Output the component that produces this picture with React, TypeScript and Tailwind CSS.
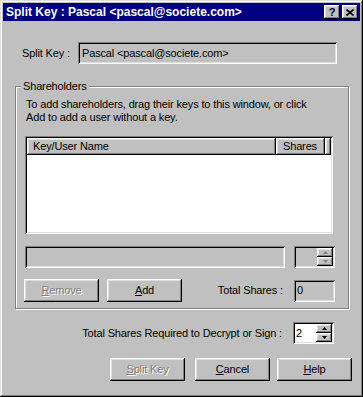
import React from 'react';

const raised =
  'shadow-[inset_-1px_-1px_0_#000,inset_1px_1px_0_#fff,inset_-2px_-2px_0_#808080,inset_2px_2px_0_#dfdfdf]';
const sunken =
  'shadow-[inset_1px_1px_0_#808080,inset_-1px_-1px_0_#fff,inset_2px_2px_0_#000,inset_-2px_-2px_0_#dfdfdf]';

const Btn: React.FC<{ label: string; u: number; disabled?: boolean; className?: string }> = ({
  label,
  u,
  disabled,
  className = '',
}) => (
  <div
    className={`flex h-[23px] w-[75px] items-center justify-center bg-[#c0c0c0] shadow-[inset_-1px_-1px_0_#000,inset_1px_1px_0_#fff,inset_-2px_-2px_0_#808080,inset_2px_2px_0_#dfdfdf] ${
      disabled ? 'text-[#808080] [text-shadow:1px_1px_0_#fff]' : 'text-black'
    } ${className}`}
  >
    <span>
      {label.slice(0, u)}
      <span className="underline underline-offset-[1px]">{label[u]}</span>
      {label.slice(u + 1)}
    </span>
  </div>
);

const Spinner: React.FC<{ disabled?: boolean }> = ({ disabled }) => {
  const fill = disabled ? '#808080' : '#000';
  return (
    <div className="flex flex-col">
      <div className={`flex h-[9px] w-[16px] items-center justify-center bg-[#c0c0c0] ${raised}`}>
        <svg width="5" height="3" viewBox="0 0 5 3">
          <path d="M2.5 0 L5 3 L0 3 Z" fill={fill} />
        </svg>
      </div>
      <div className={`flex h-[9px] w-[16px] items-center justify-center bg-[#c0c0c0] ${raised}`}>
        <svg width="5" height="3" viewBox="0 0 5 3">
          <path d="M0 0 L5 0 L2.5 3 Z" fill={fill} />
        </svg>
      </div>
    </div>
  );
};

export default function App() {
  return (
    <div
      className="flex h-[397px] w-[363px] flex-col bg-[#c0c0c0] p-[3px] text-[11px] leading-[13px] tracking-[-0.15px] text-black shadow-[inset_-1px_-1px_0_#000,inset_1px_1px_0_#dfdfdf,inset_-2px_-2px_0_#808080,inset_2px_2px_0_#fff]"
      style={{ fontFamily: '"Liberation Sans", Arial, sans-serif' }}
    >
      {/* title bar */}
      <div className="flex h-[18px] items-center bg-[#000080] pl-[3px] pr-[2px]">
        <span className="flex-1 text-[12px] font-bold tracking-normal text-white">Split Key : Pascal &lt;pascal@societe.com&gt;</span>
        <div className={`flex h-[14px] w-[16px] items-center justify-center bg-[#c0c0c0] text-[11px] font-bold ${raised}`}>?</div>
        <div className={`ml-[2px] flex h-[14px] w-[16px] items-center justify-center bg-[#c0c0c0] ${raised}`}>
          <svg width="8" height="7" viewBox="0 0 8 7">
            <path d="M0.5 0.5 L7.5 6.5 M7.5 0.5 L0.5 6.5" stroke="#000" strokeWidth="1.6" />
          </svg>
        </div>
      </div>

      {/* split key row */}
      <div className="mt-[21px] flex items-center pl-[19px]">
        <span className="w-[56px]">Split Key :</span>
        <div className={`flex h-[22px] w-[259px] items-center bg-[#c0c0c0] pl-[4px] ${sunken}`}>
          Pascal &lt;pascal@societe.com&gt;
        </div>
      </div>

      {/* shareholders group */}
      <fieldset className="ml-[12px] mt-[16px] w-[334px] border border-[#808080] pb-[6px] shadow-[inset_1px_1px_0_#fff,1px_1px_0_#fff]">
        <legend className="ml-[5px] bg-[#c0c0c0] px-[2px]">Shareholders</legend>
        <p className="ml-[10px] mt-[5px]">
          To add shareholders, drag their keys to this window, or click
          <br />
          Add to add a user without a key.
        </p>

        <div className={`ml-[9px] mt-[12px] flex h-[98px] w-[308px] flex-col bg-white p-[2px] ${sunken}`}>
          <div className="flex h-[17px]">
            <div className={`flex w-[249px] items-center bg-[#c0c0c0] pl-[6px] ${raised}`}>Key/User Name</div>
            <div className={`flex w-[49px] items-center bg-[#c0c0c0] pl-[7px] ${raised}`}>Shares</div>
            <div className={`flex-1 bg-[#c0c0c0] ${raised}`} />
          </div>
        </div>

        <div className="ml-[9px] mt-[12px] flex items-center">
          <div className={`h-[22px] w-[260px] bg-[#c0c0c0] ${sunken}`} />
          <div className={`ml-[9px] flex h-[22px] w-[41px] items-center justify-end bg-[#c0c0c0] pr-[2px] ${sunken}`}>
            <Spinner disabled />
          </div>
        </div>

        <div className="ml-[8px] mt-[11px] flex items-center">
          <Btn label="Remove" u={0} disabled />
          <Btn label="Add" u={0} className="ml-[8px]" />
          <span className="ml-[25px] w-[76px] text-right">Total Shares :</span>
          <div className={`ml-[11px] flex h-[22px] w-[41px] items-center bg-[#c0c0c0] pl-[3px] ${sunken}`}>0</div>
        </div>
      </fieldset>

      {/* required row */}
      <div className="mt-[13px] flex items-center justify-end pr-[26px]">
        <span>Total Shares Required to Decrypt or Sign :</span>
        <div className={`ml-[11px] flex h-[22px] w-[41px] items-center justify-between bg-white pl-[3px] pr-[2px] ${sunken}`}>
          <span>2</span>
          <Spinner />
        </div>
      </div>

      {/* dialog buttons */}
      <div className="mt-[14px] flex pl-[107px]">
        <Btn label="Split Key" u={0} disabled />
        <Btn label="Cancel" u={0} className="ml-[10px]" />
        <Btn label="Help" u={0} className="ml-[7px]" />
      </div>
    </div>
  );
}
